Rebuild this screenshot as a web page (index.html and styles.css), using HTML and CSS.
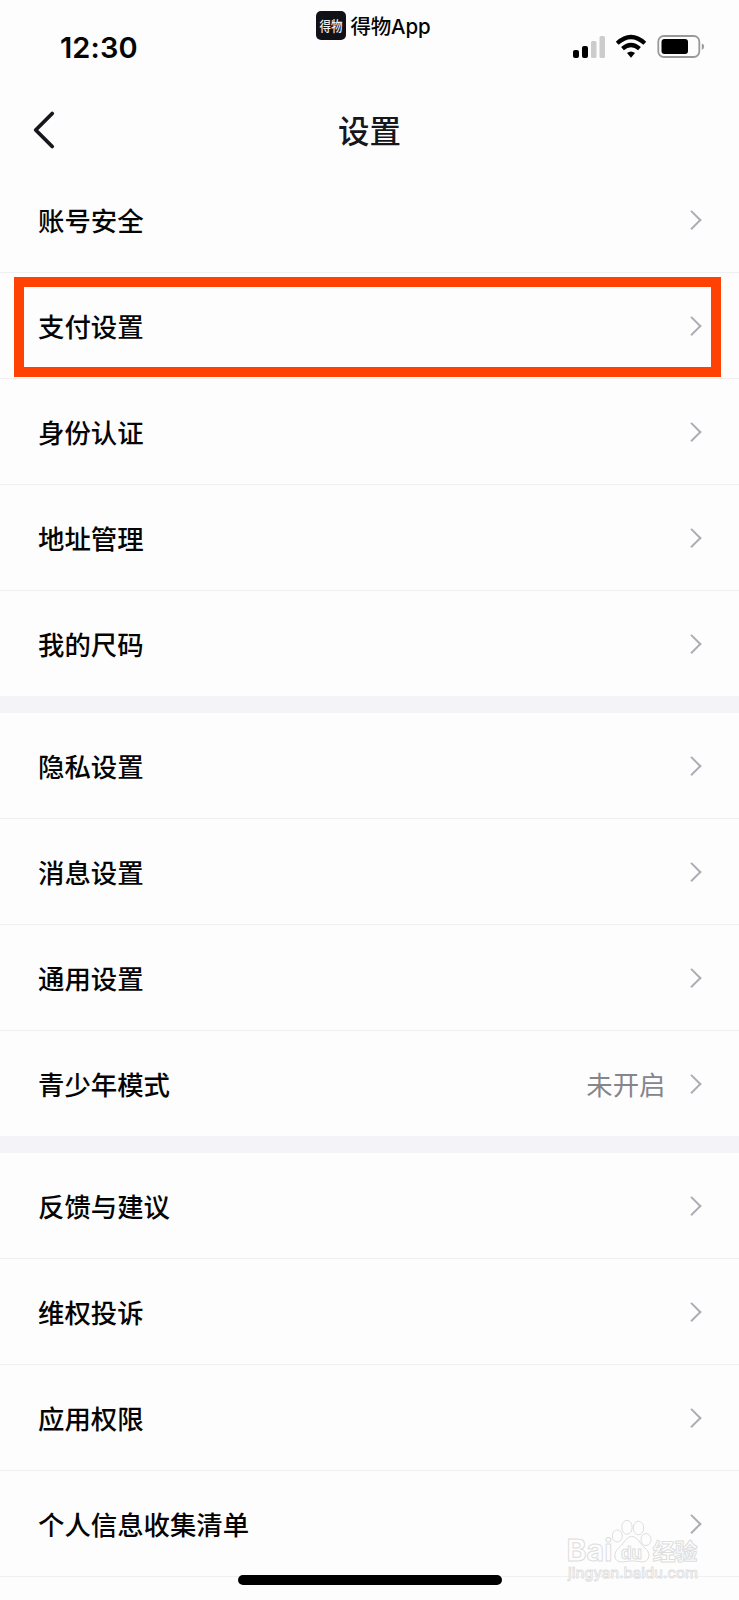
FILE: index.html
```html
<!DOCTYPE html>
<html lang="zh-CN">
<head>
<meta charset="utf-8">
<title>设置</title>
<link rel="stylesheet" href="styles.css">
</head>
<body>
<div class="screen">
  <header class="status">
    <div class="time">12:30</div>
    <div class="app"><span class="logo"><svg width="30" height="29" viewBox="0 0 30 29"><text x="0" y="0" transform="translate(3.500 19.500) scale(.82 1)">得物</text></svg></span><span class="app-name">得物App</span></div>
    <div class="indicators">
      <svg class="status-icons" width="136" height="28" viewBox="0 0 136 28">
        <rect x="2" y="16" width="6" height="8" rx="2"/>
        <rect x="11" y="12" width="6" height="12" rx="2"/>
        <rect x="20" y="7" width="5.500" height="17" rx="1.500" fill="#ccc"/>
        <rect x="28.500" y="2" width="5.500" height="22" rx="1.500" fill="#ccc"/>
        <g fill="none" stroke="#000" stroke-width="4.200">
          <path d="M46.200 9.300Q60 -3.200 73.800 9.300"/>
          <path d="M51.500 14.700Q60 7.300 68.500 14.700"/>
        </g>
        <path d="M56 19Q60 15.800 64 19L60 23.700Z"/>
        <rect x="87.300" y="2" width="41" height="21" rx="5.500" fill="none" stroke="#999" stroke-width="1.800"/>
        <rect x="90.500" y="5" width="26.500" height="15" rx="3"/>
        <path d="M130.800 9.500Q133.100 10 133.100 12.500T130.800 15.800Z" fill="#999"/>
      </svg>
    </div>
  </header>
  <nav class="titlebar">
    <svg class="back" width="24" height="40" viewBox="0 0 24 40"><path d="M20.200 3.500L3.700 20L20.200 36.500"/></svg>
    <h1>设置</h1>
  </nav>
  <main>
    <section class="group">
      <div class="row"><span>账号安全</span><i class="chevron"></i></div>
      <div class="row marked"><span>支付设置</span><i class="chevron"></i></div>
      <div class="row"><span>身份认证</span><i class="chevron"></i></div>
      <div class="row"><span>地址管理</span><i class="chevron"></i></div>
      <div class="row"><span>我的尺码</span><i class="chevron"></i></div>
    </section>
    <section class="group">
      <div class="row"><span>隐私设置</span><i class="chevron"></i></div>
      <div class="row"><span>消息设置</span><i class="chevron"></i></div>
      <div class="row"><span>通用设置</span><i class="chevron"></i></div>
      <div class="row"><span>青少年模式</span><span class="value">未开启</span><i class="chevron"></i></div>
    </section>
    <section class="group last">
      <div class="row"><span>反馈与建议</span><i class="chevron"></i></div>
      <div class="row"><span>维权投诉</span><i class="chevron"></i></div>
      <div class="row"><span>应用权限</span><i class="chevron"></i></div>
      <div class="row"><span>个人信息收集清单</span><i class="chevron"></i></div>
    </section>
  </main>
  <svg class="watermark" width="142" height="70" viewBox="0 0 142 70">
    <text x="5.500" y="41" class="wm-bold" font-size="30" textLength="46" lengthAdjust="spacingAndGlyphs">Bai</text>
    <ellipse cx="56.300" cy="16" rx="5" ry="6"/>
    <ellipse cx="66" cy="7.300" rx="5.200" ry="7"/>
    <ellipse cx="77.500" cy="8" rx="5.200" ry="6.800"/>
    <ellipse cx="85" cy="19.500" rx="5" ry="6"/>
    <path d="M63 22Q70 11 78 21Q80 25 84 28Q90 33 87 39Q84 43 78 41.500Q71 40 65 41.500Q57 43 54.500 39Q52 33 58 27.500Q61 25 63 22Z"/>
    <text x="60" y="38.500" class="wm-bold" font-size="17" textLength="21" lengthAdjust="spacingAndGlyphs">du</text>
    <text x="91.500" y="39.500" class="wm-cjk" font-size="23" textLength="45">经验</text>
    <text x="7" y="57.500" class="wm-url" font-size="14.500" textLength="130" lengthAdjust="spacingAndGlyphs">jingyan.baidu.com</text>
  </svg>
  <div class="home-indicator"></div>
</div>
</body>
</html>
```
FILE: styles.css
```css
*, *::after { box-sizing: border-box; }
body {
  margin: 0;
  background: #fdfdfd;
  color: #050505;
  font-family: Inter, "Noto Sans CJK SC", sans-serif;
}
.screen { position: relative; height: 1600px; overflow: hidden; }
.status {
  display: grid;
  grid-template-columns: 316px 1fr 168px;
  height: 96px;
}
.time {
  padding: 29px 0 0 60px;
  font-size: 29px;
  line-height: 37px;
  font-weight: 600;
  letter-spacing: 0.1px;
}
.app { display: flex; gap: 4.5px; padding-top: 11px; }
.logo {
  width: 30px;
  height: 29px;
  border-radius: 5px;
  background: #111217;
}
.logo svg { display: block; }
.logo text {
  fill: #eee;
  font-family: "Noto Sans CJK SC", sans-serif;
  font-size: 14px;
  font-weight: 500;
}
.app-name { font-size: 20.5px; line-height: 32px; font-weight: 500; letter-spacing: -0.2px; }
.indicators { padding-top: 34px; }
.status-icons { display: block; }
.titlebar {
  display: grid;
  grid-template-columns: 80px 1fr 80px;
  height: 71px;
}
.back {
  margin: 14px 0 0 32px;
  fill: none;
  stroke: #16171d;
  stroke-width: 3.8;
  stroke-linecap: round;
  stroke-linejoin: round;
}
h1 {
  margin: 13px 0 0;
  color: #16171d;
  font-size: 31.5px;
  line-height: 46px;
  font-weight: 500;
  text-align: center;
}
.group { border-bottom: 17px solid #f3f3f8; }
.group.last { border-bottom: 0; }
.row {
  display: flex;
  align-items: center;
  height: 106px;
  padding: 0 41px 0 38px;
  border-bottom: 1px solid #f0f0f3;
  font-size: 26.4px;
  font-weight: 500;
}
.group:not(.last) .row:last-child { height: 105px; border-bottom: 0; }
.row .value { margin-left: auto; margin-right: 19px; color: #85858e; font-weight: 400; }
.chevron {
  width: 13.5px;
  height: 13.5px;
  margin-left: auto;
  border: solid #acacb5;
  border-width: 2px 2px 0 0;
  transform: rotate(45deg);
}
.value + .chevron { margin-left: 0; }
.marked { position: relative; }
.marked::after {
  content: "";
  position: absolute;
  left: 14px;
  right: 18px;
  top: 4px;
  height: 100px;
  border: 10px solid #ff4203;
}
.watermark {
  position: absolute;
  left: 561px;
  top: 1520px;
  fill: #fdfdfd;
  stroke: #dedede;
  stroke-width: 1;
}
.wm-bold { font-family: Inter, sans-serif; font-weight: 700; }
.wm-cjk { font-family: "Noto Sans CJK SC", sans-serif; font-weight: 700; }
.wm-url { font-family: Inter, sans-serif; font-weight: 500; stroke-width: 0.8; }
.home-indicator {
  position: absolute;
  left: 238px;
  top: 1575px;
  width: 264px;
  height: 10px;
  border-radius: 5px;
  background: #000;
}
```
